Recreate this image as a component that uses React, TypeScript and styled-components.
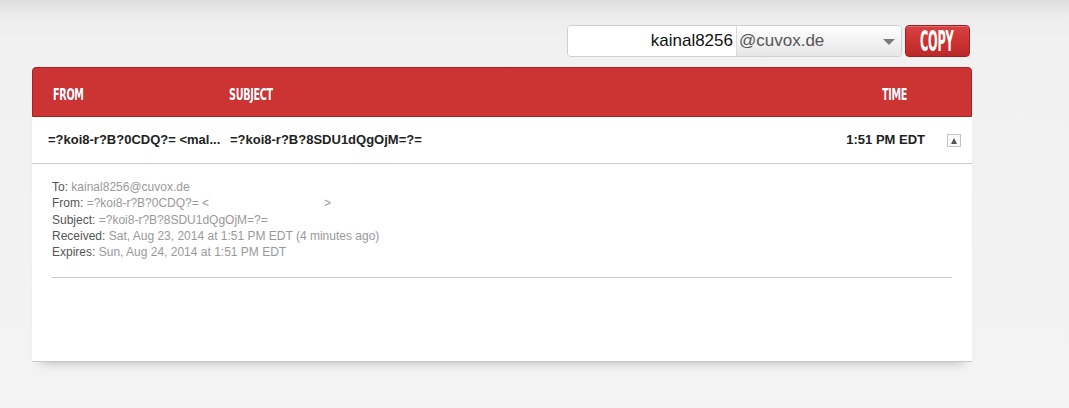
import React from 'react'
import styled, { createGlobalStyle } from 'styled-components'

const GlobalStyle = createGlobalStyle`
  html, body {
    margin: 0;
    padding: 0;
  }

  body {
    min-height: 408px;
    background: linear-gradient(to bottom, #dedede 0px, #ececec 14px, #f1f1f1 40px, #f3f3f3 100%);
    font-family: 'Liberation Sans', Arial, sans-serif;
  }
`

const Page = styled.div`
  width: 940px;
  padding: 25px 0 0 32px;
`

const Toolbar = styled.div`
  display: flex;
  justify-content: flex-end;
  align-items: stretch;
  height: 32px;
  margin-right: 2px;
`

const AddressBox = styled.div`
  display: flex;
  width: 335px;
  border: 1px solid #cfcfcf;
  border-radius: 4px;
  overflow: hidden;
  box-sizing: border-box;
`

const UserField = styled.div`
  width: 168px;
  background: #fff;
  color: #111;
  font-size: 17px;
  line-height: 30px;
  text-align: right;
  padding-right: 3px;
  box-sizing: border-box;
`

const DomainSelect = styled.div`
  flex: 1;
  display: flex;
  align-items: center;
  justify-content: space-between;
  padding: 0 6px 0 2px;
  background: linear-gradient(to bottom, #ffffff 0%, #f3f3f3 50%, #e6e6e6 100%);
  border-left: 1px solid #dcdcdc;
  color: #555;
  font-size: 17px;
`

const Caret = styled.span`
  width: 0;
  height: 0;
  border-left: 6px solid transparent;
  border-right: 6px solid transparent;
  border-top: 6px solid #7a7a7a;
  margin-top: 2px;
`

const Condensed = styled.span<{ $size: number; $squeeze: number }>`
  display: inline-block;
  font-family: 'DejaVu Sans Condensed', 'DejaVu Sans', sans-serif;
  font-stretch: condensed;
  font-weight: bold;
  font-size: ${(p) => p.$size}px;
  letter-spacing: -0.5px;
  transform: scaleX(${(p) => p.$squeeze});
  transform-origin: left center;
  color: #fff;
  white-space: nowrap;
`

const CopyButton = styled.button`
  display: flex;
  align-items: center;
  width: 65px;
  margin-left: 3px;
  padding: 0 0 0 14px;
  border: 1px solid #a31f1f;
  border-radius: 4px;
  background: linear-gradient(to bottom, #d94242 0%, #c93131 60%, #bb2828 100%);
  box-shadow: inset 0 1px 0 rgba(255, 255, 255, 0.2);
  cursor: pointer;
`

const ButtonLabel = styled(Condensed)`
  flex-shrink: 0;
  margin-right: -50px;
`

const Panel = styled.div`
  margin-top: 10px;
  background: #fff;
  border-bottom: 1px solid #c8c8c8;
  box-shadow: 0 9px 10px -9px rgba(0, 0, 0, 0.28);
`

const TableHead = styled.div`
  display: flex;
  align-items: center;
  height: 50px;
  box-sizing: border-box;
  background: #cc3333;
  border: 1px solid #a52121;
  border-radius: 4px 4px 0 0;
  padding: 5px 20px 0 20px;
`

const FromCol = styled.div`
  width: 176px;
  flex-shrink: 0;
  overflow: hidden;
  white-space: nowrap;
`

const SubjectCol = styled.div`
  flex: 1;
  white-space: nowrap;
`

const TimeCol = styled.div`
  width: 69px;
  white-space: nowrap;
`

const HeadLabel = styled(Condensed)`
  text-shadow: 1px 0 0 rgba(120, 0, 60, 0.35);
`

const MailRow = styled.div`
  display: flex;
  align-items: center;
  height: 47px;
  box-sizing: border-box;
  border-bottom: 1px solid #cccccc;
  padding: 0 11px 2px 16px;
  font-size: 13px;
  font-weight: bold;
  color: #222;
`

const RowFrom = styled(FromCol)`
  width: 182px;
`

const RowTime = styled.div`
  margin-left: auto;
  white-space: nowrap;
`

const ToggleButton = styled.span`
  display: flex;
  align-items: center;
  justify-content: center;
  width: 14px;
  height: 13px;
  margin: 3px 0 0 22px;
  border: 1px solid #c4c4c4;
  box-sizing: border-box;
  background: #fafafa;

  &::after {
    content: '';
    border-left: 3px solid transparent;
    border-right: 3px solid transparent;
    border-bottom: 6px solid #555;
  }
`

const Details = styled.div`
  padding: 15px 20px 0 20px;
  height: 197px;
  box-sizing: border-box;
`

const MetaLine = styled.div`
  font-size: 12px;
  line-height: 16.3px;
  color: #555;
`

const MetaValue = styled.span`
  color: #999;
`

const Blank = styled.span`
  display: inline-block;
  width: 115px;
`

const Rule = styled.hr`
  margin: 17px 0 0 0;
  border: 0;
  border-top: 1px solid #c8c8c8;
`

const meta = [
  { label: 'To:', value: 'kainal8256@cuvox.de' },
  { label: 'From:', value: '=?koi8-r?B?0CDQ?= <', redacted: true },
  { label: 'Subject:', value: '=?koi8-r?B?8SDU1dQgOjM=?=' },
  { label: 'Received:', value: 'Sat, Aug 23, 2014 at 1:51 PM EDT (4 minutes ago)' },
  { label: 'Expires:', value: 'Sun, Aug 24, 2014 at 1:51 PM EDT' },
]

const App: React.FC = () => {
  return (
    <>
      <GlobalStyle />
      <Page>
        <Toolbar>
          <AddressBox>
            <UserField>kainal8256</UserField>
            <DomainSelect>
              @cuvox.de
              <Caret />
            </DomainSelect>
          </AddressBox>
          <CopyButton>
            <ButtonLabel $size={28} $squeeze={0.45}>COPY</ButtonLabel>
          </CopyButton>
        </Toolbar>

        <Panel>
          <TableHead>
            <FromCol>
              <HeadLabel $size={15} $squeeze={0.72}>FROM</HeadLabel>
            </FromCol>
            <SubjectCol>
              <HeadLabel $size={15} $squeeze={0.72}>SUBJECT</HeadLabel>
            </SubjectCol>
            <TimeCol>
              <HeadLabel $size={15} $squeeze={0.72}>TIME</HeadLabel>
            </TimeCol>
          </TableHead>

          <MailRow>
            <RowFrom>=?koi8-r?B?0CDQ?= &lt;mal...</RowFrom>
            <SubjectCol>=?koi8-r?B?8SDU1dQgOjM=?=</SubjectCol>
            <RowTime>1:51 PM EDT</RowTime>
            <ToggleButton />
          </MailRow>

          <Details>
            {meta.map((m) => (
              <MetaLine key={m.label}>
                {m.label}{' '}
                <MetaValue>
                  {m.value}
                  {m.redacted && (
                    <>
                      <Blank />
                      &gt;
                    </>
                  )}
                </MetaValue>
              </MetaLine>
            ))}
            <Rule />
          </Details>
        </Panel>
      </Page>
    </>
  )
}

export default App
